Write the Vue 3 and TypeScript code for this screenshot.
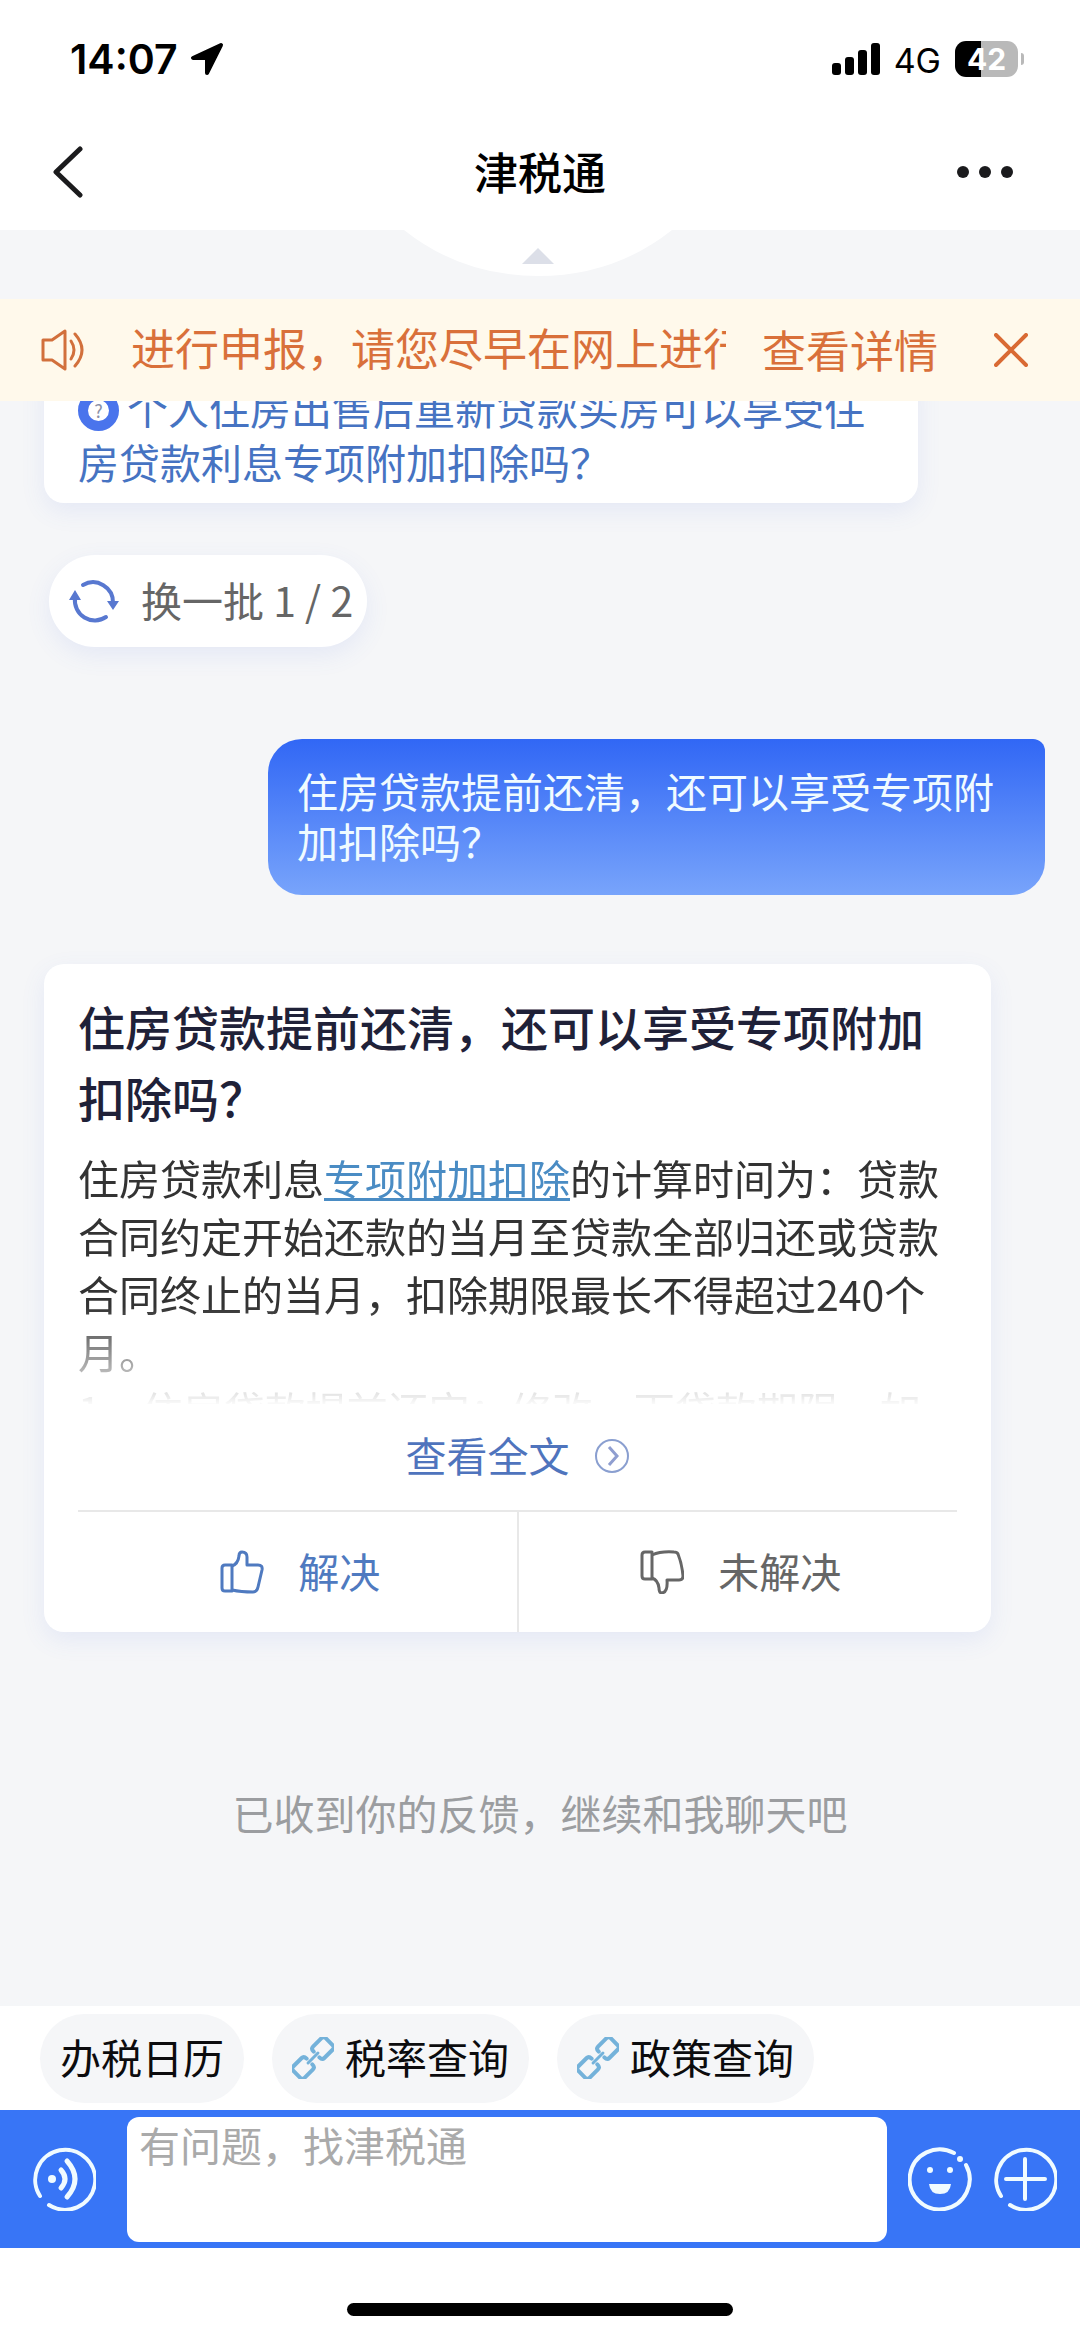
<script setup lang="ts">
import { ref } from 'vue'

interface QuickLink {
  label: string
  linked: boolean
}

const quickLinks: QuickLink[] = [
  { label: '办税日历', linked: false },
  { label: '税率查询', linked: true },
  { label: '政策查询', linked: true },
]

const batteryLevel = 42
const draft = ref('')
</script>

<template>
  <div class="app">
    <div class="status">
      <div class="status-side">
        <span class="time">14:07</span>
        <svg class="arrow" viewBox="0 0 34 34" aria-hidden="true">
          <path d="M31 3 L3 16 H17 V31 Z" fill="#000" stroke="#000" stroke-width="4" stroke-linejoin="round" />
        </svg>
      </div>
      <div class="status-side">
        <svg class="signal" viewBox="0 0 48 32" aria-hidden="true">
          <rect x="0" y="20" width="9" height="12" rx="3" />
          <rect x="13" y="14" width="9" height="18" rx="3" />
          <rect x="26" y="7" width="9" height="25" rx="3" />
          <rect x="39" y="0" width="9" height="32" rx="3" />
        </svg>
        <span class="network">4G</span>
        <div class="battery">
          <span
            class="battery-body"
            :style="{ background: `linear-gradient(90deg, #000 ${batteryLevel}%, #b9b9b9 ${batteryLevel}%)` }"
          >{{ batteryLevel }}</span>
          <span class="battery-nub"></span>
        </div>
      </div>
    </div>

    <header class="header">
      <button class="icon-btn" type="button" aria-label="返回">
        <svg width="32" height="52" viewBox="0 0 32 52">
          <path d="M28 3 L4 26 L28 49" fill="none" stroke="#1b1b1d" stroke-width="5" stroke-linecap="round" stroke-linejoin="round" />
        </svg>
      </button>
      <h1 class="title">津税通</h1>
      <button class="icon-btn" type="button" aria-label="更多">
        <svg width="58" height="14" viewBox="0 0 58 14" fill="#1b1b1d">
          <circle cx="7" cy="7" r="6" />
          <circle cx="29" cy="7" r="6" />
          <circle cx="51" cy="7" r="6" />
        </svg>
      </button>
    </header>

    <div class="pull">
      <svg width="268" height="46" viewBox="0 0 268 46" aria-hidden="true">
        <path d="M0 0 Q58 46 134 46 Q210 46 268 0 Z" fill="#fff" />
        <path d="M118 34 L134 18 L150 34 Z" fill="#dcdfe8" />
      </svg>
    </div>

    <div class="notice">
      <svg class="speaker" width="44" height="42" viewBox="0 0 44 42" fill="none" stroke="#d2703c" stroke-width="3" stroke-linejoin="round" stroke-linecap="round" aria-hidden="true">
        <path d="M2 11 H11 L24 2 V40 L11 31 H2 Z" />
        <path d="M30 12 Q36 21 30 30" />
        <path d="M34 5 Q48 21 34 37" />
      </svg>
      <p class="notice-text">进行申报，请您尽早在网上进行申报</p>
      <button class="notice-link" type="button">查看详情</button>
      <button class="icon-btn" type="button" aria-label="关闭">
        <svg width="34" height="34" viewBox="0 0 34 34">
          <path d="M2 2 L32 32 M32 2 L2 32" stroke="#d96a33" stroke-width="4" stroke-linecap="round" />
        </svg>
      </button>
    </div>

    <main class="chat">
      <a class="card question" href="#"><span class="mark">?</span>个人住房出售后重新贷款买房可以享受住房贷款利息专项附加扣除吗？</a>

      <button class="refresh" type="button">
        <svg width="50" height="50" viewBox="0 0 50 50" aria-hidden="true">
          <g fill="none" stroke="#5878d0" stroke-width="4" stroke-linecap="round">
            <path d="M14 9 A20 20 0 0 1 44 27" />
            <path d="M6 22 A20 20 0 0 0 37 41" />
          </g>
          <path d="M38 25 H50 L44 34 Z M0 24 H12 L6 14 Z" fill="#5878d0" />
        </svg>
        <span class="label">换一批 1 / 2</span>
      </button>

      <div class="bubble">住房贷款提前还清，还可以享受专项附加扣除吗？</div>

      <article class="card answer">
        <h2 class="answer-title">住房贷款提前还清，还可以享受专项附加扣除吗？</h2>
        <div class="answer-body">
          <p>住房贷款利息<a class="term" href="#">专项附加扣除</a>的计算时间为：贷款合同约定开始还款的当月至贷款全部归还或贷款合同终止的当月，扣除期限最长不得超过240个月。</p>
          <p>1、住房贷款提前还完：修改一下贷款期限，如</p>
        </div>
        <button class="more" type="button">
          <span class="label">查看全文</span>
          <svg width="36" height="36" viewBox="0 0 36 36" fill="none" aria-hidden="true">
            <circle cx="18" cy="18" r="16" stroke="#8a9fd0" stroke-width="2" />
            <path d="M15 9 L23 18 L15 27" stroke="#8f9ed0" stroke-width="3" />
          </svg>
        </button>
        <div class="votes">
          <button class="vote vote-yes" type="button">
            <svg width="44" height="44" viewBox="0 0 44 44" fill="none" stroke="currentColor" stroke-width="3" stroke-linejoin="round" aria-hidden="true">
              <path d="M12 15 H5 Q2 15 2 18 V38 Q2 41 5 41 H12 Z" />
              <path d="M12 16 Q18 14 19 6 Q19 2 22 2 Q27 2 27 7 V15 H38 Q43 15 42 20 L38 37 Q37 42 33 42 Q21 42 12 40" />
            </svg>
            <span class="label">解决</span>
          </button>
          <button class="vote vote-no" type="button">
            <svg width="44" height="44" viewBox="0 0 44 44" fill="none" stroke="currentColor" stroke-width="3" stroke-linejoin="round" aria-hidden="true">
              <path d="M12 29 H5 Q2 29 2 26 V5 Q2 2 5 2 H12 Z" />
              <path d="M12 28 Q18 30 19 38 Q19 43 22 43 Q28 42 27 30 H39 Q43 30 43 26 Q42 14 38 4 Q37 2 34 2 Q21 1 12 5" />
            </svg>
            <span class="label">未解决</span>
          </button>
        </div>
      </article>

      <p class="feedback">已收到你的反馈，继续和我聊天吧</p>
    </main>

    <nav class="quick">
      <button v-for="item in quickLinks" :key="item.label" class="chip" type="button">
        <svg v-if="item.linked" width="42" height="42" viewBox="-1 -1 42 42" fill="none" stroke="#74b2da" stroke-width="4" stroke-linecap="round" aria-hidden="true">
          <g transform="rotate(-45 20 20)">
            <path d="M15 16 Q15 12 12 12 H0 Q-3 12 -3 15 V25 Q-3 28 0 28 H12 Q15 28 15 24" />
            <path d="M25 16 Q25 12 28 12 H40 Q43 12 43 15 V25 Q43 28 40 28 H28 Q25 28 25 24" />
            <path d="M13 20 H27" stroke-width="3" />
          </g>
        </svg>
        <span class="label">{{ item.label }}</span>
      </button>
    </nav>

    <form class="composer" @submit.prevent>
      <button class="icon-btn voice" type="button" aria-label="语音输入">
        <svg width="64" height="64" viewBox="0 0 64 64" fill="none" stroke="#f0fbff" stroke-width="5" stroke-linecap="round">
          <path d="M8 49 A30 30 0 1 1 17 58" stroke-width="4" />
          <circle cx="20" cy="32" r="4" fill="#f0fbff" stroke="none" />
          <path d="M29 23 Q37 32 29 41" />
          <path d="M35 14 Q51 32 35 50" />
        </svg>
      </button>
      <textarea v-model="draft" class="input" placeholder="有问题，找津税通" aria-label="输入问题"></textarea>
      <button class="icon-btn" type="button" aria-label="表情">
        <svg width="64" height="64" viewBox="0 0 64 64" fill="#f0fbff">
          <path d="M46 6 A30 30 0 1 0 58 18" fill="none" stroke="#f0fbff" stroke-width="4" stroke-linecap="round" />
          <circle cx="52" cy="12" r="3" />
          <circle cx="22" cy="23" r="3" />
          <circle cx="42" cy="23" r="3" />
          <path d="M21 37 H43 Q42 47 32 47 Q22 47 21 37 Z" />
        </svg>
      </button>
      <button class="icon-btn" type="button" aria-label="添加">
        <svg width="64" height="64" viewBox="0 0 64 64" fill="none" stroke="#f0fbff" stroke-width="4" stroke-linecap="round">
          <path d="M8 49 A30 30 0 1 1 17 58" />
          <path d="M32 12 V52 M13 32 H52" />
        </svg>
      </button>
    </form>

    <div class="home"><span class="home-bar"></span></div>
  </div>
</template>

<style>
body {
  margin: 0;
}
</style>

<style scoped>
.app {
  display: flex;
  flex-direction: column;
  min-height: 100vh;
  background: #fff;
  color: #333;
  font-family: "Noto Sans CJK SC", sans-serif;
  font-size: 41px;
}

.app * {
  box-sizing: border-box;
}

p,
h1,
h2 {
  margin: 0;
}

svg {
  display: block;
  flex: none;
}

button {
  margin: 0;
  padding: 0;
  border: 0;
  background: none;
  color: inherit;
  font: inherit;
}

.icon-btn {
  display: flex;
  flex: none;
}

.label {
  padding-bottom: 5px;
}

.status {
  display: flex;
  justify-content: space-between;
  align-items: center;
  height: 118px;
  padding: 0 56px 0 70px;
  color: #000;
  font-family: Inter, sans-serif;
}

.status-side {
  display: flex;
  align-items: center;
}

.time {
  font-size: 41px;
  font-weight: 600;
}

.arrow {
  width: 34px;
  height: 34px;
  margin-left: 12px;
}

.signal {
  width: 48px;
  height: 32px;
}

.network {
  margin: 2px 14px 0;
  font-size: 34px;
}

.battery {
  display: flex;
  align-items: center;
  gap: 3px;
}

.battery-body {
  width: 63px;
  height: 36px;
  border-radius: 11px;
  color: #fff;
  font-size: 30px;
  font-weight: 700;
  line-height: 36px;
  text-align: center;
}

.battery-nub {
  width: 3px;
  height: 12px;
  border-radius: 0 3px 3px 0;
  background: #b9b9b9;
}

.header {
  display: flex;
  justify-content: space-between;
  align-items: center;
  height: 112px;
  padding: 0 66px 4px 52px;
}

.title {
  flex: 1;
  padding: 0 0 3px 40px;
  color: #000;
  font-size: 44px;
  font-weight: 500;
  line-height: 58px;
  text-align: center;
}

.pull {
  display: flex;
  justify-content: center;
  height: 69px;
  padding-right: 4px;
  background: #f5f6f8;
}

.notice {
  display: flex;
  align-items: center;
  height: 102px;
  padding: 0 52px 0 41px;
  background: #fff9eb;
  color: #d9703a;
  font-size: 44px;
  line-height: 58px;
}

.notice-text {
  flex: 1;
  min-width: 0;
  margin: 0 36px 6px 46px;
  overflow: hidden;
  white-space: nowrap;
}

.notice-link {
  margin: 0 56px 2px 0;
}

.chat {
  display: flex;
  flex: 1;
  flex-direction: column;
  align-items: flex-start;
  overflow: hidden;
  background: #f5f6f8;
}

.card {
  border-radius: 20px;
  background: #fff;
  box-shadow: 0 8px 24px rgba(90, 120, 230, 0.1);
}

.question {
  display: block;
  margin: -36px 162px 0 44px;
  padding: 15px 34px;
  color: #4673c2;
  line-height: 54px;
  text-decoration: none;
}

.mark {
  display: inline-block;
  width: 41px;
  height: 41px;
  margin-right: 8px;
  border: 10px solid #4a74ec;
  border-radius: 50%;
  color: #8a90a8;
  font-size: 18px;
  line-height: 20px;
  text-align: center;
  vertical-align: 7px;
}

.refresh {
  display: flex;
  align-items: center;
  gap: 22px;
  height: 92px;
  margin: 52px 0 0 49px;
  padding: 0 14px 0 20px;
  border-radius: 46px;
  background: #fff;
  box-shadow: 0 8px 24px rgba(90, 120, 230, 0.1);
  color: #666;
}

.bubble {
  margin: 92px 35px 0 268px;
  padding: 26px 29px 30px;
  border-radius: 34px 12px 34px 34px;
  background: linear-gradient(180deg, #3167f5, #78a4fb);
  color: #f0fbff;
  line-height: 50px;
}

.answer {
  margin: 69px 89px 0 44px;
  padding: 26px 34px 0;
}

.answer-title {
  color: #1f2138;
  font-size: 47px;
  font-weight: 500;
  line-height: 71px;
}

.answer-body {
  height: 256px;
  margin-top: 16px;
  overflow: hidden;
  line-height: 58px;
  -webkit-mask-image: linear-gradient(180deg, #000 62%, transparent 101%);
  mask-image: linear-gradient(180deg, #000 62%, transparent 101%);
}

.term {
  color: #4a8cc4;
  text-decoration: underline;
  text-decoration-thickness: 3px;
  text-underline-offset: 3px;
}

.more {
  display: flex;
  justify-content: center;
  align-items: center;
  gap: 24px;
  width: 100%;
  height: 106px;
  padding-bottom: 2px;
  color: #4f74bd;
}

.votes {
  display: flex;
  height: 122px;
  border-top: 2px solid #e8e8e8;
}

.vote {
  display: flex;
  flex: 1;
  justify-content: center;
  align-items: center;
  gap: 34px;
  padding-left: 6px;
}

.vote-yes {
  border-right: 2px solid #e8e8e8;
  color: #4f7ac0;
}

.vote-no {
  color: #666;
}

.feedback {
  align-self: center;
  margin-top: 151px;
  color: #9b9da0;
  line-height: 58px;
}

.quick {
  display: flex;
  align-items: center;
  gap: 28px;
  height: 104px;
  padding: 0 40px;
  color: #0c0c0e;
}

.chip {
  display: flex;
  align-items: center;
  gap: 11px;
  height: 89px;
  padding: 0 20px;
  border-radius: 45px;
  background: #f5f6f8;
}

.composer {
  display: flex;
  align-items: center;
  gap: 21px;
  height: 138px;
  padding: 0 23px 0 32px;
  background: #3875f6;
}

.voice {
  margin-right: 10px;
}

.input {
  flex: 1;
  min-width: 0;
  height: 125px;
  margin: 0;
  padding: 2px 12px;
  border: 0;
  border-radius: 12px;
  outline: 0;
  background: #fff;
  color: #333;
  font: inherit;
  line-height: 50px;
  resize: none;
}

.input::placeholder {
  color: #aaa;
  opacity: 1;
}

.home {
  display: flex;
  justify-content: center;
  height: 89px;
  padding-top: 55px;
}

.home-bar {
  width: 386px;
  height: 13px;
  border-radius: 7px;
  background: #000;
}
</style>
